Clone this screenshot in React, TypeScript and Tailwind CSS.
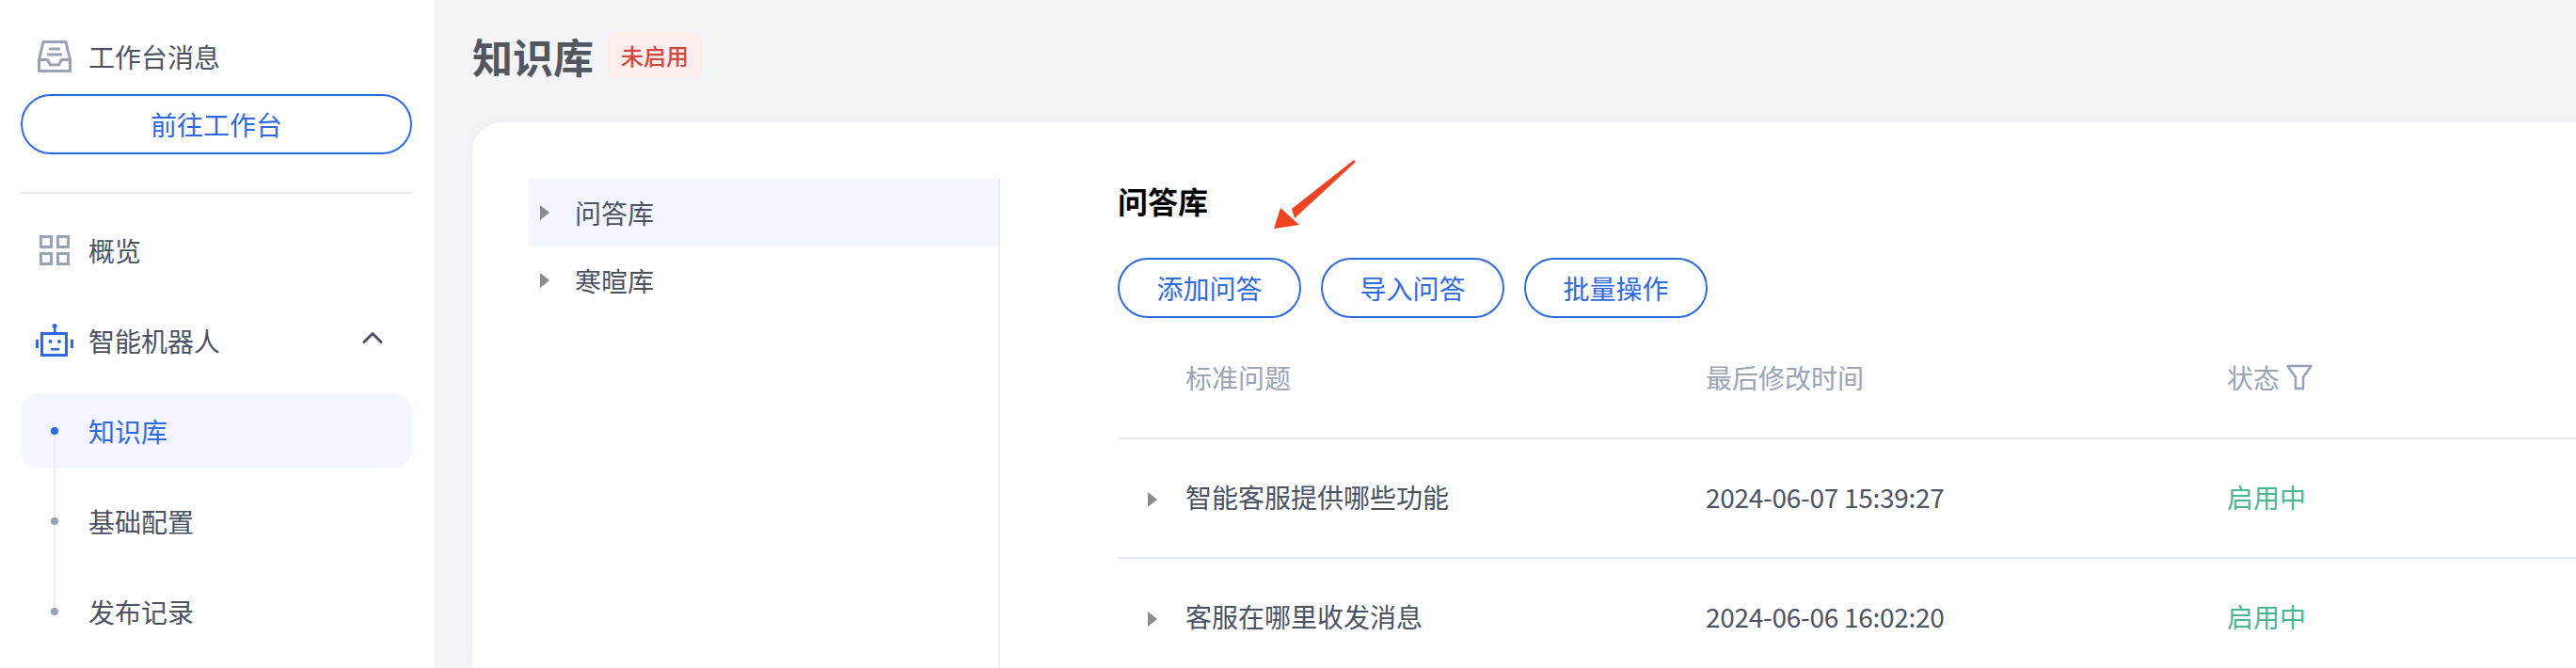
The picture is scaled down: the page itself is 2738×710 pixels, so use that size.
import { ChevronUp } from 'lucide-react';

const font = { fontFamily: '"Noto Sans CJK SC", "Noto Sans", sans-serif' };

function Triangle() {
    return <span className="w-0 h-0 border-y-[8px] border-y-transparent border-l-[10px] border-l-[#8c8c8c]"></span>;
}

function InboxIcon() {
    return (
        <svg width="36" height="34" viewBox="0 0 36 34" fill="none" stroke="#99a1b4" strokeWidth="3" strokeLinejoin="round">
            <path d="M6 1.500h24l4.500 19v12h-33v-12z" />
            <path d="M1.500 20.500h9l3 5.500h9l3-5.500h9" />
            <path d="M12 9h12M10 15h16" />
        </svg>
    );
}

function GridIcon() {
    return (
        <svg width="32" height="32" viewBox="0 0 32 32" fill="none" stroke="#99a1b4" strokeWidth="3">
            <rect x="1.500" y="1.500" width="11" height="11" />
            <rect x="19.500" y="1.500" width="11" height="11" />
            <rect x="1.500" y="19.500" width="11" height="11" />
            <rect x="19.500" y="19.500" width="11" height="11" />
        </svg>
    );
}

function RobotIcon() {
    return (
        <svg width="40" height="36" viewBox="0 0 40 36" fill="#2f69e0">
            <circle cx="20" cy="2.500" r="2.500" />
            <rect x="19" y="3" width="2.500" height="6" />
            <rect x="6.500" y="10.500" width="26" height="23" fill="none" stroke="#2f69e0" strokeWidth="3" />
            <rect x="0" y="17" width="3" height="9" />
            <rect x="37" y="17" width="3" height="9" />
            <circle cx="15.500" cy="19" r="2" />
            <circle cx="25" cy="19" r="2" />
            <rect x="16" y="26" width="9" height="2.500" />
        </svg>
    );
}

function FilterIcon() {
    return (
        <svg width="28" height="28" viewBox="0 0 28 28" fill="none" stroke="#99a1b4" strokeWidth="2.500" strokeLinejoin="round">
            <path d="M1.500 2h25L18 14v12h-8V14z" />
        </svg>
    );
}

const rows = [
    { q: '智能客服提供哪些功能', time: '2024-06-07 15:39:27', status: '启用中' },
    { q: '客服在哪里收发消息', time: '2024-06-06 16:02:20', status: '启用中' },
];

export default function App() {
    return (
        <div className="flex w-[2738px] h-[710px] overflow-hidden bg-[#f3f4f8] text-[28px] text-[#4b5263]" style={font}>
            {/* Sidebar */}
            <aside className="w-[462px] shrink-0 bg-white pl-[22px] pr-[24px] pt-[42px]">
                <div className="flex items-center h-[36px]">
                    <span className="ml-[18px] w-[54px] shrink-0 flex"><InboxIcon /></span>
                    <span>工作台消息</span>
                </div>
                <button className="mt-[22px] w-full h-[64px] rounded-full border-2 border-[#2f69e0] text-[#2f69e0]">前往工作台</button>
                <div className="mt-[40px] h-[2px] bg-[#ebebef]"></div>
                <div className="mt-[42px] flex items-center h-[36px]">
                    <span className="ml-[20px] w-[52px] shrink-0 flex"><GridIcon /></span>
                    <span>概览</span>
                </div>
                <div className="mt-[58px] flex items-center h-[40px]">
                    <span className="ml-[16px] w-[56px] shrink-0 flex"><RobotIcon /></span>
                    <span className="flex-1">智能机器人</span>
                    <ChevronUp size={36} strokeWidth={2} className="mr-[24px] -mt-[6px]" />
                </div>
                <div className="relative mt-[36px]">
                    <span className="absolute left-[35px] top-[40px] w-[2px] h-[192px] bg-[#eceef5] z-10"></span>
                    <div className="flex items-center h-[80px] rounded-[20px] bg-[#f3f6fe] text-[#2f69e0]">
                        <span className="ml-[32px] w-[8px] h-[8px] rounded-full bg-[#2f69e0] z-20"></span>
                        <span className="ml-[32px]">知识库</span>
                    </div>
                    <div className="flex items-center h-[80px] mt-[16px]">
                        <span className="ml-[32px] w-[8px] h-[8px] rounded-full bg-[#99a1b4] z-20"></span>
                        <span className="ml-[32px]">基础配置</span>
                    </div>
                    <div className="flex items-center h-[80px] mt-[16px]">
                        <span className="ml-[32px] w-[8px] h-[8px] rounded-full bg-[#99a1b4] z-20"></span>
                        <span className="ml-[32px]">发布记录</span>
                    </div>
                </div>
            </aside>

            {/* Main */}
            <main className="flex-1 min-w-0">
                <div className="flex items-center h-[130px] pb-[12px] pl-[40px]">
                    <h1 className="text-[43px] font-bold text-[#52565f]">知识库</h1>
                    <span className="ml-[15px] flex items-center justify-center w-[100px] h-[48px] rounded-[10px] bg-[#fdeeee] text-[24px] font-medium text-[#d2483f]">未启用</span>
                </div>
                <div className="flex h-[580px] ml-[40px] pt-[60px] pl-[60px] bg-white rounded-tl-[32px] shadow-[0_0_12px_rgba(60,70,110,0.04)]">
                    {/* Tree */}
                    <div className="w-[501px] shrink-0 border-r-2 border-[#eceef5]">
                        <div className="flex items-center h-[72px] pl-[12px] bg-[#f3f6fe]">
                            <Triangle />
                            <span className="ml-[27px]">问答库</span>
                        </div>
                        <div className="flex items-center h-[72px] pl-[12px]">
                            <Triangle />
                            <span className="ml-[27px]">寒暄库</span>
                        </div>
                    </div>

                    {/* Content */}
                    <div className="relative flex-1 min-w-0 ml-[125px]">
                        <svg className="absolute left-[164px] top-[-20px]" width="90" height="76" viewBox="0 0 90 76">
                            <path d="M87 0 L89 2 L24 62 L21 52 Z M2 73 L9 51 L29 69 Z" fill="#ee4422" />
                        </svg>
                        <h2 className="h-[46px] leading-[46px] text-[32px] font-bold text-black">问答库</h2>
                        <div className="flex gap-[21px] mt-[38px]">
                            {['添加问答', '导入问答', '批量操作'].map((label) => (
                                <button key={label} className="w-[195px] h-[64px] rounded-full border-2 border-[#2f69e0] text-[#2f69e0]">{label}</button>
                            ))}
                        </div>
                        <div className="grid grid-cols-[72px_553px_554px_1fr] items-center h-[129px] pb-[2px] border-b-2 border-[#e8ebf5] text-[#9ba3b5]">
                            <span></span>
                            <span>标准问题</span>
                            <span>最后修改时间</span>
                            <span className="flex items-center gap-[7px]">状态 <FilterIcon /></span>
                        </div>
                        {rows.map((r) => (
                            <div key={r.time} className="grid grid-cols-[72px_553px_554px_1fr] items-center h-[127px] pb-[3px] border-b-2 border-[#e4e7f1]">
                                <span className="pl-[32px] pt-[6px] flex"><Triangle /></span>
                                <span>{r.q}</span>
                                <span className="tracking-[-0.28px]">{r.time}</span>
                                <span className="text-[#4cb592]">{r.status}</span>
                            </div>
                        ))}
                    </div>
                </div>
            </main>
        </div>
    );
}
